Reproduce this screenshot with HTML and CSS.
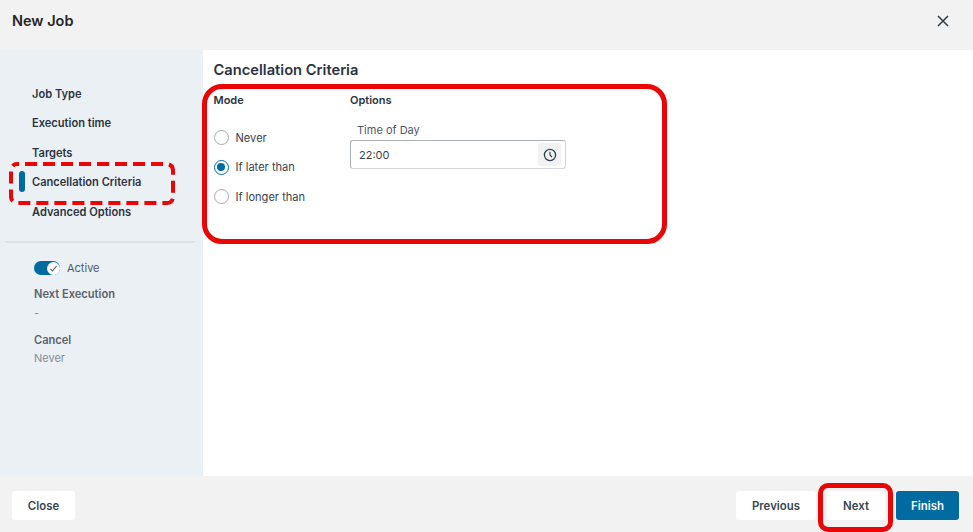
FILE: index.html
```html
<!DOCTYPE html>
<html lang="en">
<head>
<meta charset="utf-8">
<title>New Job</title>
<link rel="stylesheet" href="styles.css">
</head>
<body>
<div class="dialog">
  <header class="head">
    <h1 class="head-title">New Job</h1>
    <button class="close-x" aria-label="Close">
      <svg width="12" height="12" viewBox="0 0 12 12"><path d="M1 1l10 10M11 1L1 11" fill="none" stroke="#2f3a45" stroke-width="1.5"/></svg>
    </button>
  </header>
  <div class="body">
    <aside class="side">
      <nav class="steps">
        <div class="step">Job Type</div>
        <div class="step">Execution time</div>
        <div class="step">Targets</div>
        <div class="step step-on">Cancellation Criteria</div>
        <div class="step">Advanced Options</div>
      </nav>
      <div class="rule"></div>
      <div class="summary">
        <div class="active-row">
          <span class="toggle"><span class="knob">
            <svg width="9" height="9" viewBox="0 0 9 9"><path d="M1.5 4.8l2 2 4-4.6" fill="none" stroke="#5f6a75" stroke-width="1.2"/></svg>
          </span></span>
          <span class="active-label">Active</span>
        </div>
        <div class="s-head s-next">Next Execution</div>
        <div class="s-val s-dash">-</div>
        <div class="s-head s-cancel">Cancel</div>
        <div class="s-val s-never">Never</div>
      </div>
    </aside>
    <main class="main">
      <h2 class="title">Cancellation Criteria</h2>
      <div class="cols">
        <section class="col-mode">
          <div class="col-head">Mode</div>
          <div class="radios">
            <div class="radio-row"><span class="radio"></span>Never</div>
            <div class="radio-row"><span class="radio radio-on"></span>If later than</div>
            <div class="radio-row"><span class="radio"></span>If longer than</div>
          </div>
        </section>
        <section class="col-opt">
          <div class="col-head">Options</div>
          <div class="field-label">Time of Day</div>
          <div class="input">
            <span class="input-val">22:00</span>
            <span class="clock">
              <svg width="14" height="14" viewBox="0 0 14 14"><circle cx="7" cy="7" r="5.6" fill="none" stroke="#2f4155" stroke-width="1.3"/><path d="M7 3.8V7l2 2.2" fill="none" stroke="#2f4155" stroke-width="1.2"/></svg>
            </span>
          </div>
        </section>
      </div>
    </main>
  </div>
  <footer class="foot">
    <button class="btn btn-close">Close</button>
    <div class="foot-right">
      <button class="btn btn-prev">Previous</button>
      <button class="btn btn-next">Next</button>
      <button class="btn btn-finish">Finish</button>
    </div>
  </footer>
  <svg class="mark mark-dash" width="166" height="43" viewBox="0 0 166 43"><rect x="2" y="2" width="162" height="39" rx="6" fill="none" stroke="#ea0606" stroke-width="4" stroke-dasharray="12 6" stroke-dashoffset="10"/></svg>
  <div class="mark mark-panel"></div>
  <div class="mark mark-next"></div>
</div>
</body>
</html>
```
FILE: styles.css
```css
* { box-sizing: border-box; }
html, body { margin: 0; padding: 0; }
body { width: 973px; height: 532px; overflow: hidden; background: #fff; font-family: Inter, "Liberation Sans", sans-serif; color: #2b3440; }
.dialog { position: relative; width: 973px; height: 532px; display: flex; flex-direction: column; }

.head { height: 50px; flex: none; background: #f2f2f2; display: flex; align-items: center; justify-content: space-between; padding: 0 24px 0 12px; }
.head-title { margin: 0 0 8px; font-size: 14.5px; line-height: 24px; font-weight: 600; color: #262626; }
.close-x { border: 0; background: none; padding: 0; width: 12px; height: 12px; display: flex; margin: 0 0 9px; }

.body { flex: 1; display: flex; min-height: 0; }
.side { width: 203px; flex: none; background: #ebf0f5; padding-top: 30px; }
.steps { display: flex; flex-direction: column; }
.step { position: relative; height: 29.4px; line-height: 29.4px; padding-left: 32px; font-size: 11.1px; font-weight: 600; color: #2b3440; }
.step-on::before { content: ""; position: absolute; left: 19px; top: 3px; width: 6px; height: 21px; border-radius: 3px; background: #006ba1; }
.rule { height: 2px; margin: 14px 8px 0 5px; background: #dde1e6; }
.summary { padding: 18.5px 0 0 34px; }
.active-row { display: flex; align-items: center; height: 14px; gap: 7px; }
.toggle { width: 26px; height: 14px; border-radius: 7px; background: #006ba1; display: flex; justify-content: flex-end; align-items: center; padding-right: 0.5px; }
.knob { width: 13px; height: 13px; border-radius: 50%; background: #fff; display: flex; align-items: center; justify-content: center; }
.active-label { font-size: 11px; color: #4f5a66; }
.s-head { font-size: 11.1px; line-height: 14px; font-weight: 600; color: #5a626b; }
.s-val { font-size: 11px; line-height: 14px; color: #878d94; }
.s-next { margin-top: 12px; }
.s-dash { margin-top: 5px; }
.s-cancel { margin-top: 13px; }
.s-never { margin-top: 4px; }

.main { flex: 1; padding: 11px 0 0 10.5px; }
.title { margin: 0; font-size: 14.7px; line-height: 18px; font-weight: 600; color: #2b3440; }
.cols { display: flex; margin-top: 14px; }
.col-mode { width: 136.5px; flex: none; }
.col-head { font-size: 11px; line-height: 14px; font-weight: 600; color: #2b3440; }
.radios { margin-top: 23px; display: flex; flex-direction: column; gap: 14.5px; }
.radio-row { display: flex; align-items: center; gap: 7px; height: 15px; font-size: 11.1px; color: #39434e; }
.radio { width: 15px; height: 15px; border-radius: 50%; border: 1.5px solid #a3aab1; background: #fff; flex: none; }
.radio-on { border-color: #006ba1; position: relative; }
.radio-on::after { content: ""; position: absolute; left: 2px; top: 2px; width: 8px; height: 8px; border-radius: 50%; background: #006ba1; }
.field-label { margin: 16px 0 0 7px; font-size: 11px; line-height: 14px; color: #4f5963; }
.input { margin-top: 3px; width: 216px; height: 29px; border: 1px solid #a9afb5; border-bottom: 1.5px solid #d3d7db; border-right-color: #d3d7db; border-radius: 3px; display: flex; align-items: center; justify-content: space-between; padding: 0 4px 0 8px; background: #fff; }
.input-val { font-size: 11px; color: #39434e; }
.clock { width: 23px; height: 23px; border-radius: 3px; background: #f2f2f2; display: flex; align-items: center; justify-content: center; }

.foot { height: 56px; flex: none; background: #f2f2f2; display: flex; justify-content: space-between; align-items: flex-start; padding: 15px 14px 0 12px; }
.foot-right { display: flex; }
.btn { height: 29px; border: 0; border-radius: 3px; background: #fff; font-family: inherit; font-size: 11.4px; font-weight: 600; color: #3a4550; padding: 0; }
.btn-close { width: 63px; }
.btn-prev { width: 80px; margin-right: 11px; }
.btn-next { width: 58px; margin-right: 11px; }
.btn-finish { width: 63px; background: #006ba1; color: #fff; }

.mark { position: absolute; pointer-events: none; }
.mark-panel { left: 201.5px; top: 84px; width: 465.5px; height: 160px; border: 5px solid #ea0606; border-radius: 20px; }
.mark-dash { left: 9px; top: 162px; }
.mark-next { left: 818px; top: 483px; width: 75px; height: 49px; border: 5px solid #ea0606; border-radius: 10px; }
```
